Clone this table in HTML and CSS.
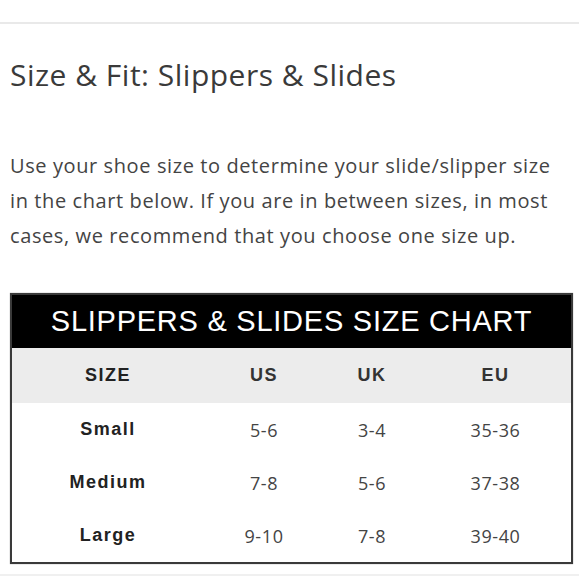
FILE: index.html
```html
<!DOCTYPE html>
<html>
<head>
<meta charset="utf-8">
<link rel="stylesheet" href="styles.css">
</head>
<body>
<div class="topbar"></div>
<main class="content">
  <h1 class="title">Size &amp; Fit: Slippers &amp; Slides</h1>
  <p class="intro">Use your shoe size to determine your slide/slipper size in the chart below. If you are in between sizes, in most cases, we recommend that you choose one size up.</p>
  <div class="chart">
    <div class="chart-title">SLIPPERS &amp; SLIDES SIZE CHART</div>
    <div class="row head">
      <div class="cell label">SIZE</div>
      <div class="cell">US</div>
      <div class="cell">UK</div>
      <div class="cell">EU</div>
    </div>
    <div class="row">
      <div class="cell label">Small</div>
      <div class="cell">5-6</div>
      <div class="cell">3-4</div>
      <div class="cell">35-36</div>
    </div>
    <div class="row">
      <div class="cell label">Medium</div>
      <div class="cell">7-8</div>
      <div class="cell">5-6</div>
      <div class="cell">37-38</div>
    </div>
    <div class="row">
      <div class="cell label">Large</div>
      <div class="cell">9-10</div>
      <div class="cell">7-8</div>
      <div class="cell">39-40</div>
    </div>
  </div>
</main>
<div class="bottomline"></div>
</body>
</html>
```
FILE: styles.css
```css
* { box-sizing: border-box; }
html, body { margin: 0; padding: 0; background: #fff; }
body {
  font-family: "Open Sans", "Liberation Sans", Arial, sans-serif;
  color: #333;
  width: 579px;
  height: 580px;
  overflow: hidden;
}
.topbar {
  height: 24px;
  border-bottom: 2px solid #e9e9e9;
}
.content {
  padding: 35px 10px 0 10px;
}
.title {
  margin: 0;
  font-weight: normal;
  font-size: 30px;
  line-height: 32px;
  letter-spacing: 0.5px;
  color: #3a3a3a;
  white-space: nowrap;
}
.intro {
  margin: 57px 0 0 0;
  font-size: 20px;
  line-height: 35px;
  letter-spacing: 0.6px;
  color: #444;
  width: 562px;
}
.chart {
  margin-top: 40px;
  width: 563px;
  border: 2px solid #3a3a3a;
  box-shadow: 0 0 1px #888;
}
.chart-title {
  background: #000;
  color: #fff;
  text-align: center;
  font-family: "Liberation Sans", Arial, sans-serif;
  font-size: 29px;
  letter-spacing: 0.75px;
  height: 53px;
  line-height: 53px;
  white-space: nowrap;
}
.row {
  display: grid;
  grid-template-columns: 192px 120px 96px 1fr;
  height: 53px;
  align-items: center;
  font-size: 18px;
  letter-spacing: 0.6px;
  color: #444;
}
.row.head {
  background: #ececec;
  height: 55px;
  font-family: "Liberation Sans", Arial, sans-serif;
  font-weight: bold;
  letter-spacing: 1.5px;
  color: #333;
}
.cell { text-align: center; }
.label {
  font-family: "Liberation Sans", Arial, sans-serif;
  font-weight: bold;
  letter-spacing: 1.5px;
  color: #222;
}
.bottomline {
  margin-top: 10px;
  height: 2px;
  background: #f0f0f0;
}
```
